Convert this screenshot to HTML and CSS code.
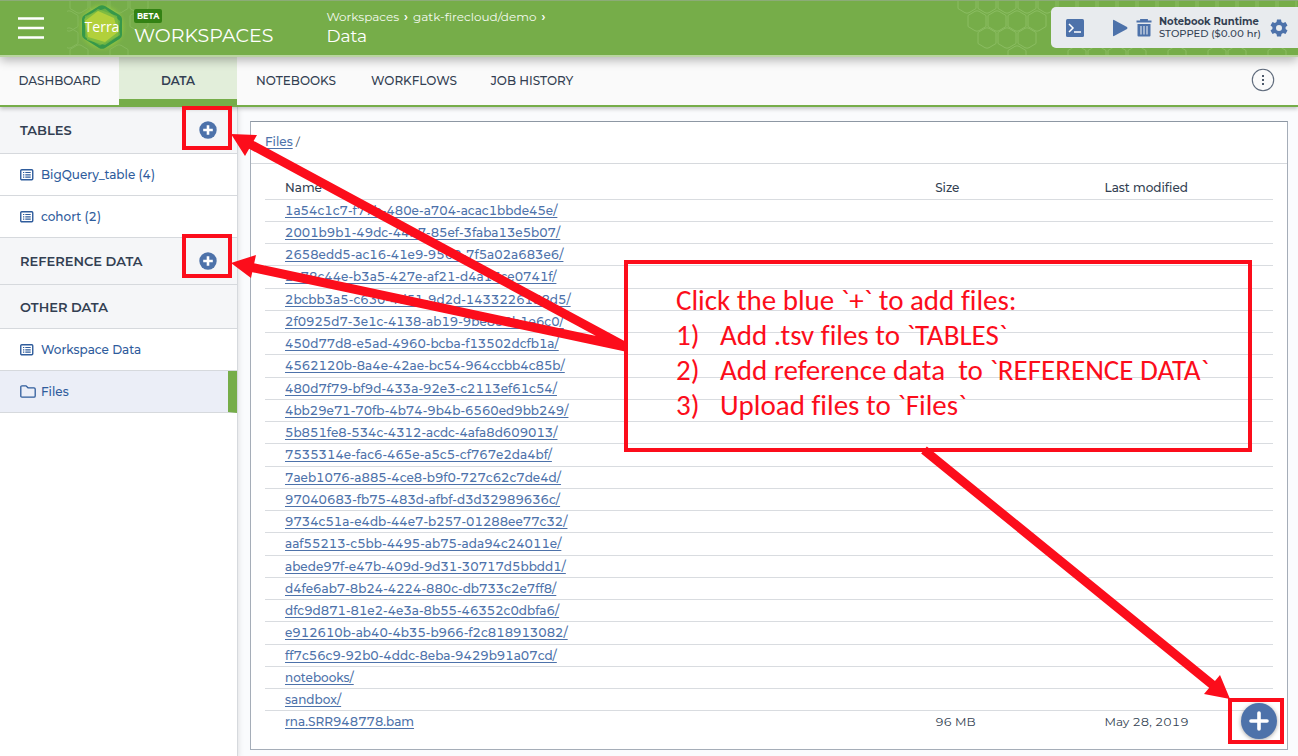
FILE: index.html
```html
<!DOCTYPE html>
<html lang="en">
<head>
<meta charset="utf-8">
<title>Workspaces - Data</title>
<link rel="stylesheet" href="styles.css">
</head>
<body>
<svg class="defs" aria-hidden="true">
  <symbol id="i-list" viewBox="0 0 14 12"><rect x=".75" y=".75" width="12" height="10" rx="1" fill="none" stroke="currentColor" stroke-width="1.4"/><path d="M3 3.5h1.3M3 5.8h1.3M3 8.1h1.3M5.3 3.5h5.4M5.3 5.8h5.4M5.3 8.1h5.4" stroke="currentColor" stroke-width="1.2"/></symbol>
  <symbol id="i-plus" viewBox="0 0 18 18"><circle cx="9" cy="9" r="8.7" fill="currentColor"/><path d="M9 4.2v9.6M4.2 9h9.6" stroke="#fff" stroke-width="2.6"/></symbol>
  <symbol id="hex" viewBox="-10 -10 20 20" overflow="visible"><path d="M-2-9.7h0L-9-5.500V5.500L-2 9.700q2 1 4 0L9 5.500V-5.500L2-9.700q-2-1-4 0z" fill="none" stroke="#8bbd62" stroke-width="1"/></symbol>
</svg>
<div class="page">
  <header class="topbar">
    <svg class="hexes" width="348" height="54" aria-hidden="true">
      <g>
        <use href="#hex" x="7" y="-8" width="20" height="20"/><use href="#hex" x="27" y="-8" width="20" height="20"/><use href="#hex" x="47" y="-8" width="20" height="20"/><use href="#hex" x="67" y="-8" width="20" height="20"/><use href="#hex" x="87" y="-8" width="20" height="20"/><use href="#hex" x="107" y="-8" width="20" height="20"/><use href="#hex" x="127" y="-8" width="20" height="20"/><use href="#hex" x="147" y="-8" width="20" height="20"/><use href="#hex" x="167" y="-8" width="20" height="20"/><use href="#hex" x="187" y="-8" width="20" height="20"/><use href="#hex" x="207" y="-8" width="20" height="20"/><use href="#hex" x="227" y="-8" width="20" height="20"/><use href="#hex" x="247" y="-8" width="20" height="20"/><use href="#hex" x="267" y="-8" width="20" height="20"/><use href="#hex" x="287" y="-8" width="20" height="20"/><use href="#hex" x="307" y="-8" width="20" height="20"/><use href="#hex" x="327" y="-8" width="20" height="20"/>
        <use href="#hex" x="17" y="10" width="20" height="20"/><use href="#hex" x="37" y="10" width="20" height="20"/><use href="#hex" x="57" y="10" width="20" height="20"/><use href="#hex" x="77" y="10" width="20" height="20"/>
        <use href="#hex" x="27" y="27" width="20" height="20"/><use href="#hex" x="47" y="27" width="20" height="20"/><use href="#hex" x="67" y="27" width="20" height="20"/>
        <use href="#hex" x="57" y="45" width="20" height="20"/><use href="#hex" x="117" y="45" width="20" height="20"/><use href="#hex" x="137" y="45" width="20" height="20"/><use href="#hex" x="157" y="45" width="20" height="20"/><use href="#hex" x="177" y="45" width="20" height="20"/><use href="#hex" x="217" y="45" width="20" height="20"/><use href="#hex" x="257" y="45" width="20" height="20"/><use href="#hex" x="277" y="45" width="20" height="20"/><use href="#hex" x="317" y="45" width="20" height="20"/>
      </g>
    </svg>
    <button class="menu" aria-label="Menu"><svg width="28" height="24" viewBox="0 0 28 24"><path d="M1 2.500h26M1 12h26M1 21.500h26" stroke="#fff" stroke-width="2.300"/></svg></button>
    <a class="brand" href="#">
      <svg width="90" height="54" viewBox="0 0 90 54" aria-label="Terra">
        <defs><radialGradient id="glow"><stop offset=".65" stop-color="#a4d63c" stop-opacity=".95"/><stop offset="1" stop-color="#76ad49" stop-opacity="0"/></radialGradient></defs>
        <g opacity=".75"><use href="#hex" x="2" y="-8" width="20" height="20"/><use href="#hex" x="22" y="-8" width="20" height="20"/><use href="#hex" x="42" y="-8" width="20" height="20"/><use href="#hex" x="62" y="-8" width="20" height="20"/><use href="#hex" x="-8" y="10" width="20" height="20"/><use href="#hex" x="-8" y="27" width="20" height="20"/><use href="#hex" x="2" y="44" width="20" height="20"/><use href="#hex" x="42" y="44" width="20" height="20"/><use href="#hex" x="62" y="10" width="20" height="20"/></g>
        <circle cx="35" cy="26" r="26" fill="url(#glow)"/>
        <g>
          <path d="M32 5q3-1.700 6 0L52.500 14q2.500 1.500 2.500 4v16q0 2.500-2.500 4L38 47q-3 1.700-6 0L17.500 38Q15 36.500 15 34V18q0-2.500 2.500-4z" fill="#36984a"/>
          <path d="M18 15 38 7.500 53 20l-2 15-18 9.500L18 36z" fill="#8fc43f" opacity=".55"/>
          <path d="m31 8 19 7L53 34 38 44 20 39 17 18z" fill="#8fc43f" opacity=".6"/>
          <path d="m31 10 16 7 4 14-13 10-17-5-3-16z" fill="#b2d03b"/>
        </g>
        <text x="35" y="31" text-anchor="middle" class="logo-text">Terra</text>
      </svg>
      <span class="brand-copy"><span class="beta">BETA</span><span class="brand-name">WORKSPACES</span></span>
    </a>
    <div class="crumbs">
      <nav class="crumb-path"><a href="#">Workspaces</a><span class="sep">›</span><a href="#">gatk-firecloud/demo</a><span class="sep">›</span></nav>
      <div class="crumb-title">Data</div>
    </div>
    <div class="runtime">
      <button class="term" aria-label="Terminal"><svg width="18" height="18" viewBox="0 0 18 18"><rect width="18" height="18" rx="1.500" fill="currentColor"/><path d="m3 5 4 4-4 4M8 13h7" fill="none" stroke="#fff" stroke-width="1.500"/></svg></button>
      <button class="play" aria-label="Start"><svg width="16" height="18" viewBox="0 0 16 18"><path d="M1 1.500Q1 .5 2 1l13 7q1 1 0 2L2 17q-1 .5-1-.5z" fill="currentColor"/></svg></button>
      <button class="bin" aria-label="Delete"><svg width="16" height="18" viewBox="0 0 16 18"><path d="M.5 2.500h15M5 2V1h6v1" fill="none" stroke="currentColor" stroke-width="1.800"/><path d="M1.500 5h13v11.500q0 1-1 1h-11q-1 0-1-1z" fill="currentColor"/><path d="M5 7v8.500M8 7v8.500M11 7v8.500" stroke="#e8ebee" stroke-width="1.100"/></svg></button>
      <div class="runtime-copy"><strong>Notebook Runtime</strong><span>STOPPED ($0.00 hr)</span></div>
      <button class="gear" aria-label="Settings"><svg width="18" height="18" viewBox="0 0 18 18"><path d="M7 .5h4l.5 2.500 1.600.9 2.400-.9 2 3.500-1.900 1.600v1.800l1.900 1.600-2 3.500-2.400-.9-1.600.9-.5 2.500H7l-.5-2.500-1.600-.9-2.400.9-2-3.500 1.900-1.600V8.100L.5 6.500l2-3.500 2.400.9L6.500 3zM9 6a3 3 0 1 0 0 6 3 3 0 0 0 0-6z" fill="currentColor" fill-rule="evenodd"/></svg></button>
    </div>
  </header>
  <nav class="tabs">
    <a href="#">DASHBOARD</a><a href="#" class="active">DATA</a><a href="#">NOTEBOOKS</a><a href="#">WORKFLOWS</a><a href="#">JOB HISTORY</a>
    <button class="more" aria-label="More"><svg width="24" height="24" viewBox="0 0 24 24"><circle cx="12" cy="12" r="10.700" fill="none" stroke="#5f6b7c" stroke-width="1.100"/><path d="M11 7h2v2h-2zM11 11h2v2h-2zM11 15h2v2h-2z" fill="#4d596a"/></svg></button>
  </nav>
  <div class="body">
    <aside class="side">
      <div class="group tall"><h2>TABLES</h2><button aria-label="Add table"><svg width="18" height="18"><use href="#i-plus"/></svg></button></div>
      <a class="item" href="#"><svg width="14" height="12"><use href="#i-list"/></svg>BigQuery_table (4)</a>
      <a class="item" href="#"><svg width="14" height="12"><use href="#i-list"/></svg>cohort (2)</a>
      <div class="group tall"><h2>REFERENCE DATA</h2><button aria-label="Add reference data"><svg width="18" height="18"><use href="#i-plus"/></svg></button></div>
      <div class="group"><h2>OTHER DATA</h2></div>
      <a class="item" href="#"><svg width="14" height="12"><use href="#i-list"/></svg>Workspace Data</a>
      <a class="item selected" href="#"><svg class="folder" width="16" height="13" viewBox="0 0 16 13"><path d="M.8 2q0-1.200 1.200-1.200h4L8 2.800h6q1.200 0 1.200 1.200v7q0 1.200-1.200 1.200H2Q.8 12.200.8 11z" fill="none" stroke="currentColor" stroke-width="1.300"/></svg>Files</a>
    </aside>
    <main class="main">
      <section class="panel">
        <div class="path"><a href="#">Files</a> /</div>
        <div class="files">
          <table>
            <colgroup><col class="c-name"><col class="c-size"><col></colgroup>
            <thead><tr><th>Name</th><th>Size</th><th>Last modified</th></tr></thead>
            <tbody>
              <tr><td><a href="#">1a54c1c7-f77b-480e-a704-acac1bbde45e/</a></td><td></td><td></td></tr>
              <tr><td><a href="#">2001b9b1-49dc-44b7-85ef-3faba13e5b07/</a></td><td></td><td></td></tr>
              <tr><td><a href="#">2658edd5-ac16-41e9-9568-7f5a02a683e6/</a></td><td></td><td></td></tr>
              <tr><td><a href="#">2a78c44e-b3a5-427e-af21-d4a13ce0741f/</a></td><td></td><td></td></tr>
              <tr><td><a href="#">2bcbb3a5-c630-4d51-9d2d-1433226138d5/</a></td><td></td><td></td></tr>
              <tr><td><a href="#">2f0925d7-3e1c-4138-ab19-9be858b1e6c0/</a></td><td></td><td></td></tr>
              <tr><td><a href="#">450d77d8-e5ad-4960-bcba-f13502dcfb1a/</a></td><td></td><td></td></tr>
              <tr><td><a href="#">4562120b-8a4e-42ae-bc54-964ccbb4c85b/</a></td><td></td><td></td></tr>
              <tr><td><a href="#">480d7f79-bf9d-433a-92e3-c2113ef61c54/</a></td><td></td><td></td></tr>
              <tr><td><a href="#">4bb29e71-70fb-4b74-9b4b-6560ed9bb249/</a></td><td></td><td></td></tr>
              <tr><td><a href="#">5b851fe8-534c-4312-acdc-4afa8d609013/</a></td><td></td><td></td></tr>
              <tr><td><a href="#">7535314e-fac6-465e-a5c5-cf767e2da4bf/</a></td><td></td><td></td></tr>
              <tr><td><a href="#">7aeb1076-a885-4ce8-b9f0-727c62c7de4d/</a></td><td></td><td></td></tr>
              <tr><td><a href="#">97040683-fb75-483d-afbf-d3d32989636c/</a></td><td></td><td></td></tr>
              <tr><td><a href="#">9734c51a-e4db-44e7-b257-01288ee77c32/</a></td><td></td><td></td></tr>
              <tr><td><a href="#">aaf55213-c5bb-4495-ab75-ada94c24011e/</a></td><td></td><td></td></tr>
              <tr><td><a href="#">abede97f-e47b-409d-9d31-30717d5bbdd1/</a></td><td></td><td></td></tr>
              <tr><td><a href="#">d4fe6ab7-8b24-4224-880c-db733c2e7ff8/</a></td><td></td><td></td></tr>
              <tr><td><a href="#">dfc9d871-81e2-4e3a-8b55-46352c0dbfa6/</a></td><td></td><td></td></tr>
              <tr><td><a href="#">e912610b-ab40-4b35-b966-f2c818913082/</a></td><td></td><td></td></tr>
              <tr><td><a href="#">ff7c56c9-92b0-4ddc-8eba-9429b91a07cd/</a></td><td></td><td></td></tr>
              <tr><td><a href="#">notebooks/</a></td><td></td><td></td></tr>
              <tr><td><a href="#">sandbox/</a></td><td></td><td></td></tr>
              <tr><td><a href="#">rna.SRR948778.bam</a></td><td>96 MB</td><td>May 28, 2019</td></tr>
            </tbody>
          </table>
        </div>
        <button class="upload" aria-label="Upload file"><svg width="20" height="20" viewBox="0 0 20 20"><path d="M10 2v16M2 10h16" stroke="#fff" stroke-width="3.600" stroke-linecap="round"/></svg></button>
      </section>
    </main>
  </div>
  <svg class="arrows" aria-hidden="true">
    <g fill="none" stroke="#fc0d1b" stroke-width="4"><rect x="184" y="108" width="46" height="40"/><rect x="184" y="236" width="46" height="40"/><rect x="1230" y="700" width="52" height="42"/></g>
    <g stroke="#fc0d1b" stroke-width="9"><path d="M626 347 248 143M626 347 250 267M924 450l290 236"/></g>
    <g fill="#fc0d1b"><path d="m231 134 26 1-12 21zM231 263l25-8-5 23zM1230 699l-26-5 16-19z"/></g>
  </svg>
  <div class="callout">
    <p>Click the blue `+` to add files:</p>
    <ol><li>Add .tsv files to `TABLES`</li><li>Add reference data&nbsp; to `REFERENCE DATA`</li><li>Upload files to `Files`</li></ol>
  </div>
</div>
</body>
</html>
```

FILE: styles.css
```css
* { box-sizing: border-box; }
body { margin: 0; font: 12px/16px Montserrat, Inter, "Open Sans", sans-serif; font-weight: 500; color: #333f52; }
button { padding: 0; border: 0; background: none; color: #4d72aa; display: flex; cursor: pointer; }
a { color: #4d72aa; text-decoration: none; }
h2, p, ol { margin: 0; }
.defs { position: absolute; width: 0; height: 0; }
.page { position: relative; min-height: 100vh; display: flex; flex-direction: column; overflow: hidden; background: #fafbfd; }

.topbar { position: relative; z-index: 2; display: flex; align-items: center; height: 57px; padding-left: 17px; background: #76ad49; border-top: 1px solid #8cab78; border-bottom: 2px solid #b9d5a0; box-shadow: 0 3px 10px rgba(0, 0, 0, .3); color: #fff; }
.hexes { position: absolute; right: 0; top: 0; }
.brand { display: flex; margin-left: 22px; color: #fff; }
.logo-text { font: 500 14px "Open Sans", sans-serif; fill: #fff; }
.brand-copy { display: flex; flex-direction: column; align-items: flex-start; margin-left: -23px; padding-top: 8px; }
.beta { padding: 0 3px; border-radius: 2px; background: #338214; font-size: 8px; line-height: 14px; font-weight: 700; }
.brand-name { font-size: 19px; line-height: 25px; font-weight: 400; }
.crumbs { margin-left: 53px; padding-bottom: 1px; }
.crumb-path { display: flex; font-weight: 400; }
.crumb-path a { color: #f4f9ef; }
.sep { padding: 0 5px; font-weight: 600; }
.crumb-title { font-size: 17px; line-height: 22px; font-weight: 400; }
.runtime { position: relative; align-self: flex-start; display: flex; align-items: center; height: 41px; margin: 6px 0 0 auto; padding: 0 10px 0 15px; border-radius: 5px 0 0 5px; background: #e8ebee; color: #333f52; }
.play { margin-left: 28px; }
.bin { margin-left: 8px; }
.runtime-copy { display: flex; flex-direction: column; width: 104px; margin: 0 7px; font-size: 10px; line-height: 12px; white-space: nowrap; font-variant-numeric: tabular-nums; }

.tabs { display: flex; align-items: stretch; height: 50px; background: #fafafa; border-bottom: 2px solid #76ad49; position: relative; z-index: 1; box-shadow: 0 2px 4px rgba(0, 0, 0, .22); }
.tabs a { width: 118px; display: flex; align-items: center; justify-content: center; color: #333f52; }
.tabs a:first-child { width: 119px; }
.tabs .active { background: #e2eeda; border-bottom: 6px solid #76ad49; padding-top: 6px; font-weight: 600; }
.more { align-self: center; margin: 0 23px 2px auto; }

.body { flex: 1; display: flex; font-variant-numeric: tabular-nums; }
.side { width: 238px; flex: none; background: #fff; border-right: 1px solid #d6d9dd; box-shadow: 0 2px 6px rgba(0, 0, 0, .14); }
.group, .item { display: flex; align-items: center; border-bottom: 1px solid #d6d9dd; padding-left: 20px; }
.group { height: 44px; padding-right: 20px; justify-content: space-between; background: #f5f6f8; }
.group.tall { height: 47px; }
.group h2 { font-size: 13px; line-height: 18px; font-weight: 600; }
.item { height: 42px; gap: 7px; color: #2f5c9c; }
.selected { gap: 5px; background: #ebeef7; border-right: 9px solid #76ad49; }

.main { flex: 1; display: flex; padding: 14px 10px 6px 12px; }
.panel { position: relative; flex: 1; background: #fff; border: 1px solid #a5adb8; border-top-color: #8d97a3; }
.path { height: 42px; padding: 12px 14px; border-bottom: 1px solid #d6d9dd; font-weight: 400; }
.path a, .files a { font-weight: 500; text-decoration: underline; text-underline-offset: 2px; }
.files { padding: 12px 14px 16px; }
table { width: 100%; border-collapse: collapse; table-layout: fixed; }
.c-name { width: 64.5%; }
.c-size { width: 16.8%; }
th, td { height: 22px; padding: 1px 0 0 20px; text-align: left; font-weight: 400; border-bottom: 1px solid #d9dce0; }
th { height: 23px; font-weight: 500; }
tr:nth-child(4n) td { height: 23px; }
tr:last-child td { border-bottom: 0; }
.upload { position: absolute; right: 10px; bottom: 10px; width: 36px; height: 36px; border-radius: 50%; align-items: center; justify-content: center; background: #4d72aa; box-shadow: 0 1px 4px rgba(0, 0, 0, .35); }

.arrows { position: absolute; z-index: 3; left: 0; top: 0; width: 100%; height: 100%; pointer-events: none; }
.callout { position: absolute; z-index: 4; left: 624px; top: 260px; width: 628px; height: 192px; padding: 19px 0 0 48px; border: 4px solid #fc0d1b; color: #fc0d1b; font: 500 29px/35px Carlito, Lato, sans-serif; font-variant-ligatures: none; white-space: nowrap; }
.callout ol { padding: 0; list-style: none; counter-reset: step; }
.callout li { display: flex; counter-increment: step; }
.callout li::before { content: counter(step) ")"; width: 44px; }
```
